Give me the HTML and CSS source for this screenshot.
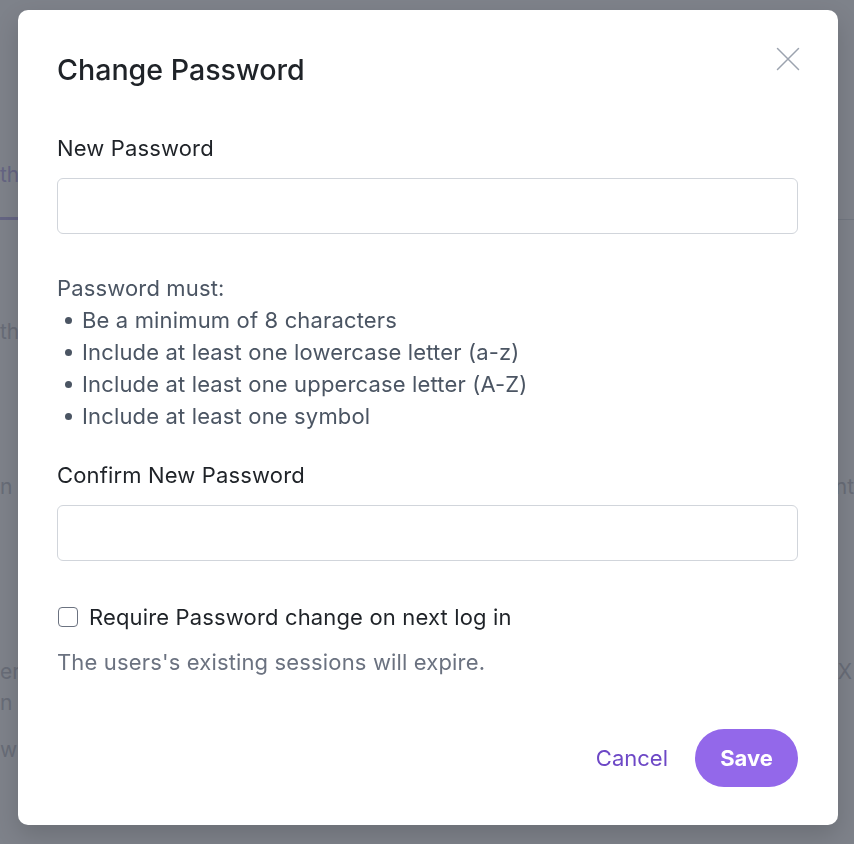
FILE: index.html
```html
<!DOCTYPE html>
<html lang="en">
<head>
<meta charset="utf-8">
<title>Change Password</title>
<link rel="stylesheet" href="styles.css">
</head>
<body>
<div class="page">
  <div class="tabs">
    <span class="tab active">th</span>
  </div>
  <div class="row r1"><span class="left">th</span></div>
  <div class="row r2"><span class="left">n a</span><span class="right">nt</span></div>
  <div class="row r3"><span class="left">er</span><span class="right">X</span></div>
  <div class="row r4"><span class="left">n a</span></div>
  <div class="row r5"><span class="left">wit</span></div>
</div>

<div class="overlay"></div>

<div class="modal" role="dialog" aria-labelledby="modal-title">
  <button class="close" type="button" aria-label="Close">
    <svg width="24" height="24" viewBox="0 0 24 24" fill="none" stroke="currentColor" stroke-width="1.5" stroke-linecap="round">
      <path d="M1.5 1.5 L22.5 22.5 M22.5 1.5 L1.5 22.5"/>
    </svg>
  </button>
  <h2 class="title" id="modal-title">Change Password</h2>

  <label class="label" for="pw1">New Password</label>
  <input class="input" id="pw1" type="password">

  <div class="rules">
    <p class="rules-head">Password must:</p>
    <ul class="rules-list">
      <li>Be a minimum of 8 characters</li>
      <li>Include at least one lowercase letter (a-z)</li>
      <li>Include at least one uppercase letter (A-Z)</li>
      <li>Include at least one symbol</li>
    </ul>
  </div>

  <label class="label label-confirm" for="pw2">Confirm New Password</label>
  <input class="input" id="pw2" type="password">

  <label class="check-row">
    <span class="checkbox"></span>
    <span>Require Password change on next log in</span>
  </label>
  <p class="help">The users's existing sessions will expire.</p>

  <div class="footer">
    <button class="btn-cancel" type="button">Cancel</button>
    <button class="btn-save" type="button">Save</button>
  </div>
</div>
</body>
</html>
```

FILE: styles.css
```css
* { box-sizing: border-box; }

html, body {
  margin: 0;
  padding: 0;
  height: 100%;
}

body {
  font-family: Inter, "Noto Sans", "Liberation Sans", sans-serif;
  background: #ffffff;
  overflow: hidden;
  width: 854px;
  height: 844px;
  position: relative;
}

/* Background page (dimmed) */
.page {
  padding-top: 161px;
  color: #cfd0d6;
  font-size: 21px;
}

.tabs {
  display: flex;
  border-bottom: 1px solid #e5e7eb;
  height: 59px;
}

.tab {
  line-height: 28px;
  width: 40px;
}

.tab.active {
  color: #c9bff0;
  border-bottom: 3px solid #c9bff0;
  margin-bottom: -1px;
}

.row {
  display: flex;
  justify-content: space-between;
  line-height: 28px;
}

.r1 { margin-top: 98px; }
.r2 { margin-top: 127px; }
.r3 { margin-top: 157px; }
.r3 .right { margin-right: 2px; }
.r4 { margin-top: 3px; }
.r5 { margin-top: 19px; }

.overlay {
  position: fixed;
  inset: 0;
  background: rgba(17, 24, 39, 0.54);
}

/* Modal */
.modal {
  position: absolute;
  left: 18px;
  top: 10px;
  width: 820px;
  height: 815px;
  background: #ffffff;
  border-radius: 10px;
  padding: 44px 40px 38px 39px;
  display: flex;
  flex-direction: column;
  box-shadow: 0 10px 25px rgba(0, 0, 0, 0.15);
  letter-spacing: 0.15px;
}

.close {
  position: absolute;
  top: 37px;
  right: 38px;
  width: 24px;
  height: 24px;
  padding: 0;
  border: 0;
  background: none;
  color: #9ca3af;
  cursor: pointer;
}

.close svg { display: block; }

.title {
  margin: 0;
  font-size: 28.6px;
  line-height: 32px;
  font-weight: 500;
  letter-spacing: 0;
  color: #1f2328;
}

.label {
  display: block;
  margin-top: 48px;
  font-size: 22px;
  line-height: 28px;
  color: #1f2328;
}

.label-confirm { margin-top: 29px; }

.input {
  display: block;
  margin-top: 16px;
  width: 100%;
  height: 56px;
  border: 1px solid #d1d5db;
  border-radius: 6px;
  background: #fff;
  font: inherit;
}

.rules {
  margin-top: 38px;
  font-size: 22px;
  line-height: 32px;
  color: #4b5563;
}

.rules-head { margin: 0; }

.rules-list {
  list-style: none;
  margin: 0;
  padding: 0 0 0 25px;
}

.rules-list li { position: relative; }

.rules-list li::before {
  content: "";
  position: absolute;
  left: -17px;
  top: 13px;
  width: 7px;
  height: 7px;
  border-radius: 50%;
  background: #4b5563;
}

.check-row {
  display: flex;
  align-items: center;
  gap: 11px;
  margin-top: 40px;
  font-size: 22px;
  line-height: 32px;
  color: #1f2328;
}

.checkbox {
  width: 20px;
  height: 20px;
  border: 1.5px solid #6b7280;
  border-radius: 4px;
  margin-left: 1px;
  flex: none;
}

.help {
  margin: 15px 0 0;
  font-size: 22px;
  line-height: 28px;
  color: #6b7280;
}

.footer {
  margin-top: auto;
  display: flex;
  justify-content: flex-end;
  align-items: center;
  gap: 27px;
}

.btn-cancel {
  border: 0;
  background: none;
  padding: 0;
  font: inherit;
  font-size: 22px;
  color: #6d48c6;
  cursor: pointer;
}

.btn-save {
  border: 0;
  width: 103px;
  height: 58px;
  border-radius: 29px;
  background: #9368ea;
  color: #ffffff;
  font: inherit;
  font-size: 22px;
  font-weight: 700;
  letter-spacing: 0;
  cursor: pointer;
}
```
